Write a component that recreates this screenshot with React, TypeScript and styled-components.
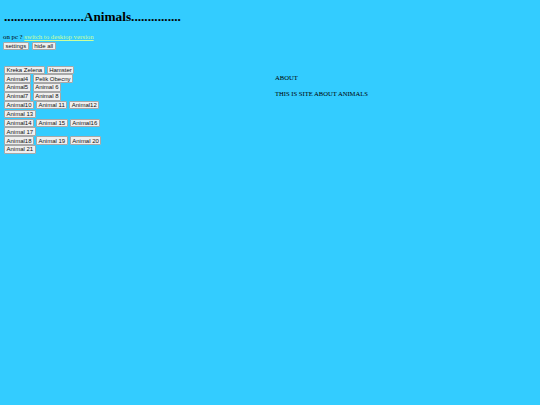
import React from 'react';
import styled, { createGlobalStyle } from 'styled-components';

const GlobalStyle = createGlobalStyle`
  html, body {
    margin: 0;
    padding: 0;
    background: #33ccff;
  }
  body {
    padding: 4px 3px;
    font-family: "Liberation Serif", "Times New Roman", serif;
    min-height: 405px;
    box-sizing: border-box;
  }
`;

const Page = styled.div`
  display: flex;
  flex-direction: column;
`;

const Title = styled.h1`
  margin: 5px 0 0 1px;
  font-size: 13.3px;
  line-height: 16px;
  font-weight: bold;
  color: #000;
`;

const Info = styled.p`
  margin: 8px 0 0;
  font-size: 6.8px;
  line-height: 8px;
  color: #000;

  a {
    color: #ccff99;
    text-decoration: underline;
  }
`;

const Toolbar = styled.div`
  display: flex;
  gap: 3px;
  margin-top: 0.5px;
`;

const Btn = styled.button`
  box-sizing: border-box;
  height: 8.5px;
  padding: 0 1.5px;
  font-family: "Liberation Sans", Arial, sans-serif;
  font-size: 6px;
  line-height: 6px;
  color: #111;
  background: #efefef;
  border: 1px solid #a8a8a8;
  border-radius: 1px;
  cursor: pointer;
`;

const Main = styled.div`
  display: grid;
  grid-template-columns: 272px 1fr;
  margin-top: 15.5px;
`;

const ButtonList = styled.div`
  display: flex;
  flex-direction: column;
  gap: 0.35px;
  padding-left: 1px;
`;

const ButtonRow = styled.div`
  display: flex;
  gap: 2px;
`;

const About = styled.div`
  padding-top: 8.5px;
  font-size: 6.6px;
  line-height: 8px;
  color: #000;
  text-transform: uppercase;

  p {
    margin: 0 0 7.5px;
  }
`;

const rows: string[][] = [
  ['Kreka Zelena', 'Hamster'],
  ['Animal4', 'Pelik Obecny'],
  ['Animal5', 'Animal 6'],
  ['Animal7', 'Animal 8'],
  ['Animal10', 'Animal 11', 'Animal12'],
  ['Animal 13'],
  ['Animal14', 'Animal 15', 'Animal16'],
  ['Animal 17'],
  ['Animal18', 'Animal 19', 'Animal 20'],
  ['Animal 21'],
];

const App = () => {
  return (
    <Page>
      <GlobalStyle />
      <Title>........................Animals...............</Title>
      <Info>
        on pc ? <a href="#desktop">switch to desktop version</a>
      </Info>
      <Toolbar>
        <Btn>settings</Btn>
        <Btn>hide all</Btn>
      </Toolbar>
      <Main>
        <ButtonList>
          {rows.map((row, i) => (
            <ButtonRow key={i}>
              {row.map((name) => (
                <Btn key={name}>{name}</Btn>
              ))}
            </ButtonRow>
          ))}
        </ButtonList>
        <About>
          <p>About</p>
          <p>This is site about animals</p>
        </About>
      </Main>
    </Page>
  );
};

export default App;
